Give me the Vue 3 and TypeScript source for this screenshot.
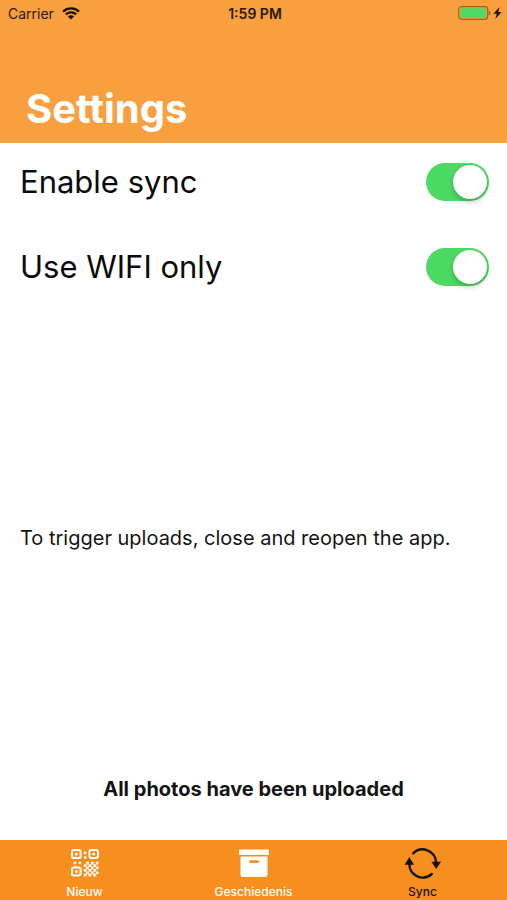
<script setup lang="ts">
import { reactive, ref } from 'vue'

interface Setting {
  id: string
  label: string
  enabled: boolean
}

const settings = reactive<Setting[]>([
  { id: 'enable-sync', label: 'Enable sync', enabled: true },
  { id: 'wifi-only', label: 'Use WIFI only', enabled: true },
])

type Tab = 'new' | 'history' | 'sync'
const tabs: { id: Tab; label: string }[] = [
  { id: 'new', label: 'Nieuw' },
  { id: 'history', label: 'Geschiedenis' },
  { id: 'sync', label: 'Sync' },
]
const activeTab = ref<Tab>('sync')

// Checkered cells in the lower right quarter of the QR icon
const cells: { x: number; y: number }[] = []
for (let row = 0; row < 6; row++) {
  for (let col = 0; col < 6; col++) {
    if ((row + col) % 2 === 1) cells.push({ x: 12.8 + col * 2.4, y: 12.8 + row * 2.4 })
  }
}
</script>

<template>
  <div class="screen">
    <header class="header">
      <div class="status">
        <div class="carrier">
          <span>Carrier</span>
          <svg class="wifi" viewBox="0 0 18 13" aria-hidden="true">
            <path d="M1 4.6C5.5.4 12.5.4 17 4.6" />
            <path d="M3.8 7.4C6.8 4.7 11.2 4.7 14.2 7.4" />
            <path class="dot" d="M9 12.6 5.9 9.5C7.6 7.9 10.4 7.9 12.1 9.5Z" />
          </svg>
        </div>
        <time class="clock">1:59 PM</time>
        <div class="power">
          <svg class="battery" viewBox="0 0 33 14" aria-hidden="true">
            <rect class="shell" x="0.7" y="0.7" width="29" height="12.6" rx="3" />
            <rect class="charge" x="2.4" y="2.2" width="25.6" height="9.6" rx="1.5" />
            <path class="tip" d="M30.8 4.8Q32.4 5.4 32.4 7T30.8 9.2Z" />
          </svg>
          <svg class="bolt" viewBox="0 0 9 12" aria-hidden="true">
            <path d="M6.6 0 .4 6.8H3.8L2.3 12 8.6 5H5.2Z" />
          </svg>
        </div>
      </div>
      <h1 class="title">Settings</h1>
    </header>

    <main class="content">
      <div class="settings">
        <div v-for="s in settings" :key="s.id" class="row">
          <label :for="s.id">{{ s.label }}</label>
          <input :id="s.id" v-model="s.enabled" class="switch" type="checkbox" role="switch" />
        </div>
      </div>
      <p class="hint">To trigger uploads, close and reopen the app.</p>
      <p class="result" role="status">All photos have been uploaded</p>
    </main>

    <nav class="tabs">
      <button
        v-for="tab in tabs"
        :key="tab.id"
        type="button"
        class="tab"
        :class="{ active: tab.id === activeTab }"
        @click="activeTab = tab.id"
      >
        <svg v-if="tab.id === 'new'" class="icon" viewBox="-4 -4 36 36" aria-hidden="true">
          <g class="finder">
            <rect x="1" y="1" width="8.6" height="8" rx="2" />
            <rect x="18.4" y="1" width="8.6" height="8" rx="2" />
            <rect x="1" y="18.6" width="8.6" height="8" rx="2" />
          </g>
          <g class="fill">
            <rect x="4" y="3.7" width="2.6" height="2.6" />
            <rect x="21.4" y="3.7" width="2.6" height="2.6" />
            <rect x="4" y="21.3" width="2.6" height="2.6" />
            <rect x="12.8" y="2.6" width="2.6" height="2.4" />
            <rect x="12.8" y="7.4" width="2.6" height="2.4" />
            <rect x="2.6" y="12.8" width="2.6" height="2.4" />
            <rect x="7.6" y="12.8" width="2.6" height="2.4" />
            <rect v-for="(c, i) in cells" :key="i" :x="c.x" :y="c.y" width="2.7" height="2.7" rx="0.5" />
          </g>
        </svg>
        <svg v-else-if="tab.id === 'history'" class="icon" viewBox="0 0 36 36" aria-hidden="true">
          <g class="fill">
            <rect x="3" y="4.5" width="30" height="5.5" rx="1" />
            <path
              fill-rule="evenodd"
              d="M4.5 11.5H31.5V30Q31.5 32 29.5 32H6.5Q4.5 32 4.5 30ZM14.4 15.2Q13 15.2 13 16.6T14.4 18H21.6Q23 18 23 16.6T21.6 15.2Z"
            />
          </g>
        </svg>
        <svg v-else class="icon" viewBox="0 0 36 36" aria-hidden="true">
          <path class="arc" d="M8.2 8.3A13.4 13.4 0 0 1 31 17" />
          <path class="arc" d="M26.8 29A13.4 13.4 0 0 1 4.4 19" />
          <path class="fill" d="M26.4 16.7H36L31.2 24Z" />
          <path class="fill" d="M-.4 19.7H9L4.3 12Z" />
        </svg>
        <span>{{ tab.label }}</span>
      </button>
    </nav>
  </div>
</template>

<style>
body {
  margin: 0;
}
</style>

<style scoped>
.screen {
  display: flex;
  flex-direction: column;
  min-height: 100vh;
  background: #fff;
  color: #0b0b0b;
  font-family: Inter, "Liberation Sans", sans-serif;
}

.header {
  background: #f89f3f;
  padding-bottom: 9px;
}

.status {
  display: grid;
  grid-template-columns: 1fr auto 1fr;
  align-items: center;
  height: 26px;
  padding: 0 5px 0 8px;
  color: #2a1703;
  font-size: 14px;
}

.carrier,
.power {
  display: flex;
  align-items: center;
  gap: 8px;
}

.power {
  justify-content: flex-end;
  gap: 2px;
}

.clock {
  font-weight: 600;
}

.wifi {
  width: 18px;
  height: 13px;
  fill: none;
  stroke: #1c0f02;
  stroke-width: 2.2;
}

.wifi .dot {
  fill: #1c0f02;
  stroke: none;
}

.battery {
  width: 33px;
  height: 14px;
}

.shell {
  fill: none;
  stroke: #9c6220;
  stroke-width: 1.2;
}

.charge {
  fill: #4cd964;
}

.tip {
  fill: #9c6220;
}

.bolt {
  width: 9px;
  height: 12px;
  fill: #1c0f02;
}

.title {
  margin: 0 26px;
  padding-top: 58px;
  color: #fff;
  font-size: 40px;
  font-weight: 700;
  line-height: 50px;
}

.content {
  display: flex;
  flex: 1;
  flex-direction: column;
}

.settings {
  display: grid;
  gap: 8px;
}

.row {
  display: flex;
  align-items: center;
  justify-content: space-between;
  height: 77px;
  padding: 0 18px 0 20px;
  font-size: 31px;
}

.switch {
  flex: none;
  appearance: none;
  width: 63px;
  height: 38px;
  margin: 0;
  padding: 2px;
  border-radius: 19px;
  background: #dcdcdc;
  cursor: pointer;
}

.switch::before {
  content: "";
  display: block;
  width: 34px;
  height: 34px;
  border-radius: 50%;
  background: #fff;
  box-shadow: 0 3px 5px rgb(0 0 0 / 22%);
}

.switch:checked {
  background: #4cd964;
}

.switch:checked::before {
  margin-left: auto;
}

.hint {
  margin: auto 20px;
  padding-bottom: 4px;
  font-size: 20px;
  line-height: 28px;
}

.result {
  margin: 0 20px;
  padding-bottom: 37px;
  font-size: 20px;
  font-weight: 700;
  line-height: 28px;
  text-align: center;
}

.hint,
.result {
  color: #141414;
}

.tabs {
  display: grid;
  grid-template-columns: repeat(3, 1fr);
  height: 60px;
  background: #f78f1e;
}

.tab {
  display: flex;
  flex-direction: column;
  align-items: center;
  gap: 3px;
  padding: 5px 0 0;
  border: 0;
  background: none;
  color: #fff;
  font: 500 12px/16px Inter, "Liberation Sans", sans-serif;
  cursor: pointer;
}

.tab.active {
  color: #17120c;
}

.icon {
  width: 36px;
  height: 36px;
  overflow: visible;
}

.fill {
  fill: currentColor;
}

.finder,
.arc {
  fill: none;
  stroke: currentColor;
  stroke-width: 2;
}

.arc {
  stroke-width: 2.4;
  stroke-linecap: round;
}
</style>
